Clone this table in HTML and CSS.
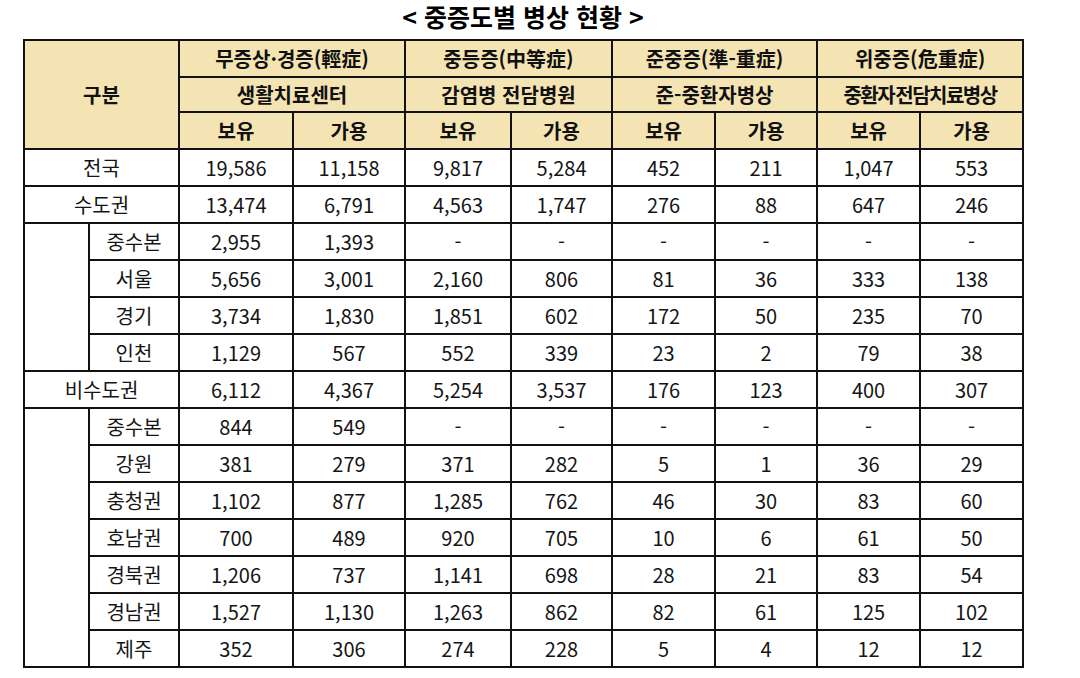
FILE: index.html
```html
<!DOCTYPE html>
<html lang="ko">
<head>
<meta charset="utf-8">
<link rel="stylesheet" href="styles.css">
</head>
<body>
<div class="page">
  <h1 class="title">&lt; 중증도별 병상 현황 &gt;</h1>
  <table class="beds">
    <colgroup>
      <col class="c-blank"><col class="c-name">
      <col class="c1"><col class="c2"><col class="c3"><col class="c4">
      <col class="c5"><col class="c6"><col class="c7"><col class="c8">
    </colgroup>
    <thead>
      <tr class="h1">
        <th colspan="2" rowspan="3">구분</th>
        <th colspan="2">무증상·경증(輕症)</th>
        <th colspan="2">중등증(中等症)</th>
        <th colspan="2">준중증(準-重症)</th>
        <th colspan="2">위중증(危重症)</th>
      </tr>
      <tr class="h2">
        <th colspan="2">생활치료센터</th>
        <th colspan="2">감염병 전담병원</th>
        <th colspan="2">준-중환자병상</th>
        <th colspan="2" class="tight">중환자 전담치료병상</th>
      </tr>
      <tr class="h3">
        <th>보유</th><th>가용</th><th>보유</th><th>가용</th>
        <th>보유</th><th>가용</th><th>보유</th><th>가용</th>
      </tr>
    </thead>
    <tbody>
      <tr><td colspan="2">전국</td><td>19,586</td><td>11,158</td><td>9,817</td><td>5,284</td><td>452</td><td>211</td><td>1,047</td><td>553</td></tr>
      <tr><td colspan="2">수도권</td><td>13,474</td><td>6,791</td><td>4,563</td><td>1,747</td><td>276</td><td>88</td><td>647</td><td>246</td></tr>
      <tr><td rowspan="4" class="blank"></td><td>중수본</td><td>2,955</td><td>1,393</td><td>-</td><td>-</td><td>-</td><td>-</td><td>-</td><td>-</td></tr>
      <tr><td>서울</td><td>5,656</td><td>3,001</td><td>2,160</td><td>806</td><td>81</td><td>36</td><td>333</td><td>138</td></tr>
      <tr><td>경기</td><td>3,734</td><td>1,830</td><td>1,851</td><td>602</td><td>172</td><td>50</td><td>235</td><td>70</td></tr>
      <tr><td>인천</td><td>1,129</td><td>567</td><td>552</td><td>339</td><td>23</td><td>2</td><td>79</td><td>38</td></tr>
      <tr><td colspan="2">비수도권</td><td>6,112</td><td>4,367</td><td>5,254</td><td>3,537</td><td>176</td><td>123</td><td>400</td><td>307</td></tr>
      <tr><td rowspan="8" class="blank"></td><td>중수본</td><td>844</td><td>549</td><td>-</td><td>-</td><td>-</td><td>-</td><td>-</td><td>-</td></tr>
      <tr><td>강원</td><td>381</td><td>279</td><td>371</td><td>282</td><td>5</td><td>1</td><td>36</td><td>29</td></tr>
      <tr><td>충청권</td><td>1,102</td><td>877</td><td>1,285</td><td>762</td><td>46</td><td>30</td><td>83</td><td>60</td></tr>
      <tr><td>호남권</td><td>700</td><td>489</td><td>920</td><td>705</td><td>10</td><td>6</td><td>61</td><td>50</td></tr>
      <tr><td>경북권</td><td>1,206</td><td>737</td><td>1,141</td><td>698</td><td>28</td><td>21</td><td>83</td><td>54</td></tr>
      <tr><td>경남권</td><td>1,527</td><td>1,130</td><td>1,263</td><td>862</td><td>82</td><td>61</td><td>125</td><td>102</td></tr>
      <tr><td>제주</td><td>352</td><td>306</td><td>274</td><td>228</td><td>5</td><td>4</td><td>12</td><td>12</td></tr>
    </tbody>
  </table>
</div>
</body>
</html>
```
FILE: styles.css
```css
html, body {
  margin: 0;
  padding: 0;
  background: #ffffff;
}

.page {
  width: 1080px;
  height: 678px;
  box-sizing: border-box;
  padding: 1px 0 0 23px;
  font-family: "Noto Sans CJK KR", "Noto Sans", sans-serif;
  color: #111;
}

.title {
  margin: 0;
  width: 1000px;
  text-align: center;
  font-size: 25px;
  font-weight: 700;
  line-height: 30px;
  height: 38px;
  color: #000;
}

.beds {
  border-collapse: collapse;
  table-layout: fixed;
  width: 1000px;
  font-size: 20px;
}

.c-blank { width: 65px; }
.c-name { width: 90px; }
.c1 { width: 114px; }
.c2 { width: 112px; }
.c3 { width: 106px; }
.c4 { width: 101px; }
.c5 { width: 103px; }
.c6 { width: 102px; }
.c7 { width: 103px; }
.c8 { width: 103px; }

.beds th,
.beds td {
  border: 2px solid #111;
  padding: 0;
  text-align: center;
  vertical-align: middle;
  white-space: nowrap;
  overflow: hidden;
}

.beds th {
  background: #f5e4b3;
  font-weight: 600;
  font-size: 20px;
  color: #111;
}

.beds th.tight {
  letter-spacing: -1.5px;
  word-spacing: -3px;
}

.beds tr.h1 { height: 37px; }
.beds tr.h2 { height: 35px; }
.beds tr.h3 { height: 37px; }

.beds tbody tr { height: 37px; }

.beds td {
  font-weight: 400;
  line-height: 1;
  color: #151515;
}
```
